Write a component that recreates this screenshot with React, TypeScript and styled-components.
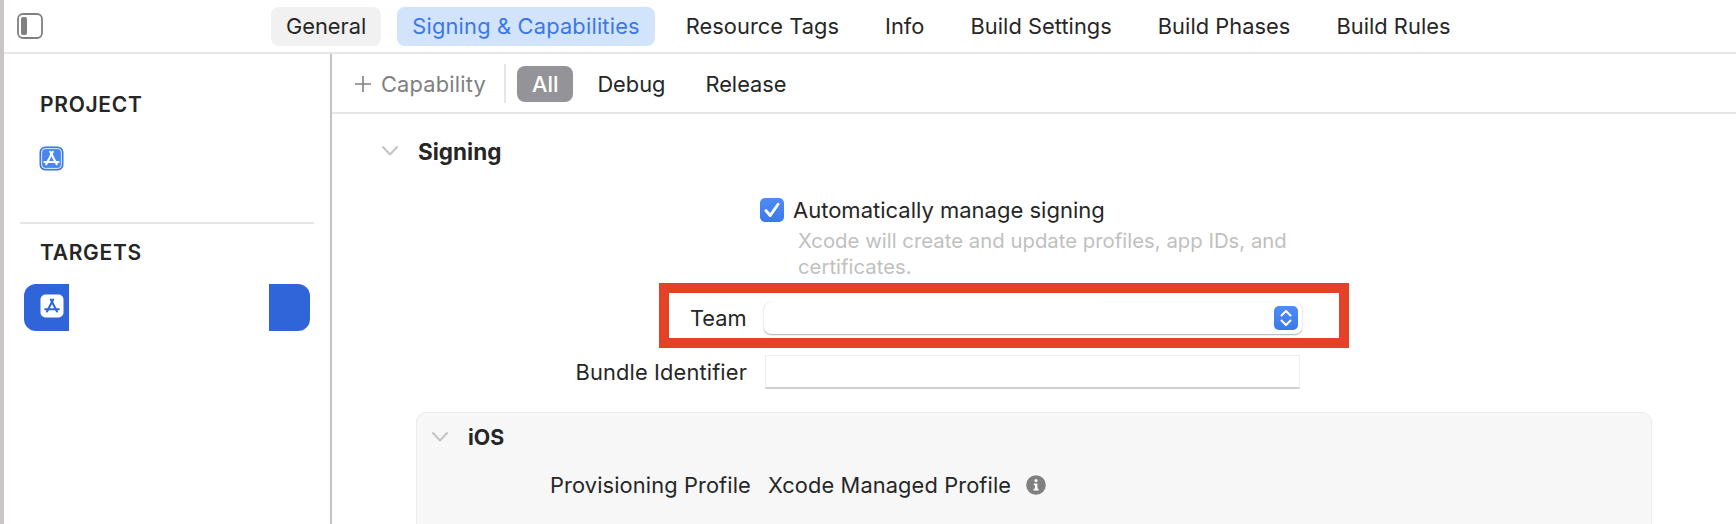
import React from "react";
import styled, { createGlobalStyle } from "styled-components";

const Global = createGlobalStyle`
  html, body { margin: 0; padding: 0; background: #fff; }
  body { font-family: Inter, "Liberation Sans", sans-serif; color: #262626; -webkit-font-smoothing: antialiased; }
`;

const Window = styled.div`
  width: 1736px;
  height: 524px;
  overflow: hidden;
  display: flex;
  flex-direction: column;
  background: #fff;
  border-left: 4px solid #c9c5c5;
  box-sizing: border-box;
`;

const TopBar = styled.header`
  height: 52px;
  flex: none;
  display: flex;
  align-items: center;
  border-bottom: 2px solid #e6e6e6;
  padding-left: 13px;
`;

const SidebarToggle = styled.svg`
  width: 26px;
  height: 26px;
  flex: none;
  margin-right: 228px;
`;

const Tabs = styled.nav`
  display: flex;
  align-items: center;
  gap: 16px;
`;

const Tab = styled.div<{ $state?: "gray" | "blue" }>`
  height: 39px;
  display: flex;
  align-items: center;
  padding: 0 15px;
  border-radius: 8px;
  font-size: 21.8px;
  letter-spacing: ${(p) => (p.$state === "blue" ? "0.2px" : p.$state === "gray" ? "0" : "0.05px")};
  background: ${(p) => (p.$state === "gray" ? "#f1f1f1" : p.$state === "blue" ? "#d2e3fc" : "transparent")};
  color: ${(p) => (p.$state === "blue" ? "#3b78e7" : "#262626")};
`;

const Body = styled.div`
  flex: 1;
  display: flex;
  min-height: 0;
`;

const Sidebar = styled.aside`
  width: 326px;
  flex: none;
  border-right: 2px solid #c4c4c4;
  display: flex;
  flex-direction: column;
  padding-top: 39px;
`;

const SideHeading = styled.h2`
  margin: 0 0 0 36px;
  font-size: 21px;
  font-weight: 600;
  line-height: 24px;
  letter-spacing: 0.7px;
  color: #262626;
`;

const ProjectIcon = styled.svg`
  width: 25px;
  height: 25px;
  flex: none;
  margin: 29px 0 0 35px;
`;

const SideRule = styled.hr`
  border: 0;
  height: 2px;
  flex: none;
  background: #e6e6e6;
  margin: 51px 0 0 16px;
  width: 294px;
`;

const TargetHeading = styled(SideHeading)`
  margin-top: 17px;
`;

const TargetRow = styled.div`
  margin: 19px 0 0 20px;
  width: 286px;
  height: 47px;
  flex: none;
  display: flex;
  justify-content: space-between;
`;

const TargetLeft = styled.div`
  width: 45px;
  background: #2f65d9;
  border-radius: 12px 0 0 12px;
  padding: 10px 0 0 16px;
  box-sizing: border-box;
`;

const TargetRight = styled.div`
  width: 41px;
  background: #2f65d9;
  border-radius: 0 12px 12px 0;
`;

const TargetIcon = styled.svg`
  display: block;
  width: 24px;
  height: 24px;
`;

const Main = styled.main`
  flex: 1;
  min-width: 0;
  display: flex;
  flex-direction: column;
`;

const SubBar = styled.div`
  height: 56px;
  padding: 2px 0 0 22px;
  flex: none;
  border-bottom: 2px solid #e6e6e6;
  display: flex;
  align-items: center;
`;

const AddCapability = styled.div`
  display: flex;
  align-items: center;
  gap: 9px;
  font-size: 21.8px;
  letter-spacing: 0.2px;
  color: #808080;
`;

const PlusIcon = styled.svg`
  width: 18px;
  height: 18px;
`;

const Divider = styled.div`
  width: 2px;
  height: 39px;
  margin: -2px 11px 0 18px;
  background: #e6e6e6;
`;

const Filter = styled.div<{ $active?: boolean }>`
  height: 36px;
  display: flex;
  align-items: center;
  padding: 0 ${(p) => (p.$active ? "15px" : "0")};
  margin-right: ${(p) => (p.$active ? "24px" : "40px")};
  border-radius: 8px;
  font-size: 21.8px;
  font-weight: ${(p) => (p.$active ? 500 : 400)};
  background: ${(p) => (p.$active ? "#949498" : "transparent")};
  color: ${(p) => (p.$active ? "#fff" : "#262626")};
`;

const Content = styled.div`
  flex: 1;
  min-height: 0;
`;

const Chevron = styled.svg`
  width: 18px;
  height: 12px;
  flex: none;
`;

const SectionHeader = styled.div`
  display: flex;
  align-items: center;
  gap: 19px;
  height: 24px;
  margin: 25px 0 0 49px;
  font-size: 22.5px;
  font-weight: 700;
  color: #262626;
`;

const CheckRow = styled.div`
  display: flex;
  align-items: center;
  gap: 9px;
  margin: 34px 0 0 428px;
  font-size: 22px;
  height: 26px;
`;

const CheckBox = styled.div`
  width: 24px;
  height: 24px;
  border-radius: 5px;
  background: linear-gradient(#4d8df5, #3b78ea);
  display: flex;
  align-items: center;
  justify-content: center;
`;

const Hint = styled.p`
  margin: 5px 0 0 466px;
  width: 520px;
  font-size: 20.3px;
  letter-spacing: 0.03px;
  line-height: 26px;
  color: #c0c0c0;
`;

const TeamFrame = styled.div`
  margin: 3px 0 0 327px;
  width: 690px;
  height: 65px;
  padding-top: 5px;
  box-sizing: border-box;
  border: 10px solid #e34226;
  background: #fff;
  display: flex;
  align-items: center;
`;

const TeamLabel = styled.div`
  font-size: 21.8px;
  margin-left: 21px;
  width: 56px;
  flex: none;
`;

const Select = styled.div`
  position: relative;
  margin-left: 18px;
  width: 538px;
  height: 32px;
  background: #fff;
  border-radius: 7px;
  box-shadow: 0 1px 1.5px rgba(0, 0, 0, 0.3), 0 0 1px rgba(0, 0, 0, 0.14);
  display: flex;
  align-items: center;
  justify-content: flex-end;
  padding-right: 4px;
  box-sizing: border-box;

  &::before {
    content: "";
    position: absolute;
    top: -2px;
    left: 10px;
    width: 324px;
    height: 3px;
    background: #fff;
  }
`;

const Stepper = styled.div`
  width: 24px;
  height: 24px;
  border-radius: 5px;
  background: linear-gradient(#4d8df5, #3b78ea);
  display: flex;
  align-items: center;
  justify-content: center;
`;

const BundleRow = styled.div`
  display: flex;
  align-items: center;
  margin-top: 7px;
  height: 34px;
`;

const FieldLabel = styled.div`
  font-size: 21.8px;
  letter-spacing: 0.15px;
  width: 415px;
  text-align: right;
  flex: none;
`;

const TextInput = styled.div`
  margin-left: 18px;
  width: 535px;
  height: 34px;
  box-sizing: border-box;
  border: 1px solid #eeeeee;
  border-bottom: 2px solid #cfcfcf;
`;

const Card = styled.section`
  margin: 23px 0 0 84px;
  width: 1236px;
  height: 140px;
  background: #f7f7f7;
  border: 1px solid #ececec;
  border-radius: 10px;
  box-sizing: border-box;
  display: flow-root;
`;

const CardHeader = styled.div`
  display: flex;
  align-items: center;
  gap: 19px;
  height: 24px;
  margin: 12px 0 0 14px;
  font-size: 21.3px;
  font-weight: 700;
`;

const ProfileRow = styled.div`
  display: flex;
  align-items: center;
  height: 26px;
  margin-top: 23px;
  font-size: 21.8px;
  letter-spacing: 0.12px;
  padding-left: 133px;
`;

const ProfileValue = styled.div`
  margin-left: 17px;
`;

const InfoIcon = styled.svg`
  width: 20px;
  height: 20px;
  margin-left: 15px;
`;

const AppGlyph = ({ color }: { color: string }) => (
  <g fill="none" stroke={color} strokeWidth="2" strokeLinecap="round">
    <path d="M10.8 5.5 L17 17.5" />
    <path d="M13.2 5.5 L7 17.5" />
    <path d="M5.2 15.3 H18.8" />
  </g>
);

const Check = () => (
  <svg width="20" height="20" viewBox="0 0 18 18">
    <path d="M3.5 9.5 L7.3 14 L14.5 3.8" fill="none" stroke="#fff" strokeWidth="2.6" strokeLinecap="round" strokeLinejoin="round" />
  </svg>
);

const Chev = () => (
  <Chevron viewBox="0 0 18 12">
    <path d="M2 2 L9 9.5 L16 2" fill="none" stroke="#c4c4c4" strokeWidth="2" strokeLinecap="round" strokeLinejoin="round" />
  </Chevron>
);

export default function App() {
  return (
    <>
      <Global />
      <Window>
        <TopBar>
          <SidebarToggle viewBox="0 0 26 26">
            <rect x="1" y="1" width="24" height="24" rx="5" fill="none" stroke="#808080" strokeWidth="1.8" />
            <rect x="4" y="4" width="6" height="18" rx="2" fill="#808080" />
          </SidebarToggle>
          <Tabs>
            <Tab $state="gray">General</Tab>
            <Tab $state="blue">Signing &amp; Capabilities</Tab>
            <Tab>Resource Tags</Tab>
            <Tab>Info</Tab>
            <Tab>Build Settings</Tab>
            <Tab>Build Phases</Tab>
            <Tab>Build Rules</Tab>
          </Tabs>
        </TopBar>
        <Body>
          <Sidebar>
            <SideHeading>PROJECT</SideHeading>
            <ProjectIcon viewBox="0 0 24 24">
              <rect x="1" y="1" width="22" height="22" rx="5" fill="#4a86ee" stroke="#2f6fe0" strokeWidth="1" />
              <rect x="2.5" y="2.5" width="19" height="19" rx="3.5" fill="none" stroke="#fff" strokeWidth="0.8" />
              <AppGlyph color="#fff" />
            </ProjectIcon>
            <SideRule />
            <TargetHeading>TARGETS</TargetHeading>
            <TargetRow>
              <TargetLeft>
                <TargetIcon viewBox="0 0 24 24">
                  <rect x="0.5" y="0.5" width="23" height="23" rx="5" fill="#fff" />
                  <AppGlyph color="#2f65d9" />
                </TargetIcon>
              </TargetLeft>
              <TargetRight />
            </TargetRow>
          </Sidebar>
          <Main>
            <SubBar>
              <AddCapability>
                <PlusIcon viewBox="0 0 18 18">
                  <path d="M9 1 V17 M1 9 H17" stroke="#808080" strokeWidth="1.6" />
                </PlusIcon>
                Capability
              </AddCapability>
              <Divider />
              <Filter $active>All</Filter>
              <Filter>Debug</Filter>
              <Filter>Release</Filter>
            </SubBar>
            <Content>
              <SectionHeader>
                <Chev />
                Signing
              </SectionHeader>
              <CheckRow>
                <CheckBox><Check /></CheckBox>
                Automatically manage signing
              </CheckRow>
              <Hint>Xcode will create and update profiles, app IDs, and certificates.</Hint>
              <TeamFrame>
                <TeamLabel>Team</TeamLabel>
                <Select>
                  <Stepper>
                    <svg width="14" height="20" viewBox="0 0 14 20">
                      <path d="M2.5 7.5 L7 3 L11.5 7.5 M2.5 12.5 L7 17 L11.5 12.5" fill="none" stroke="#fff" strokeWidth="2" strokeLinecap="round" strokeLinejoin="round" />
                    </svg>
                  </Stepper>
                </Select>
              </TeamFrame>
              <BundleRow>
                <FieldLabel>Bundle Identifier</FieldLabel>
                <TextInput />
              </BundleRow>
              <Card>
                <CardHeader>
                  <Chev />
                  iOS
                </CardHeader>
                <ProfileRow>
                  Provisioning Profile
                  <ProfileValue>Xcode Managed Profile</ProfileValue>
                  <InfoIcon viewBox="0 0 20 20">
                    <circle cx="10" cy="10" r="9.8" fill="#808080" />
                    <circle cx="10" cy="5.6" r="1.5" fill="#fff" />
                    <path d="M7.8 8.6 H11.4 V13.8 H12.6 V15.4 H7.6 V13.8 H9 V10.2 H7.8 Z" fill="#fff" />
                  </InfoIcon>
                </ProfileRow>
              </Card>
            </Content>
          </Main>
        </Body>
      </Window>
    </>
  );
}
